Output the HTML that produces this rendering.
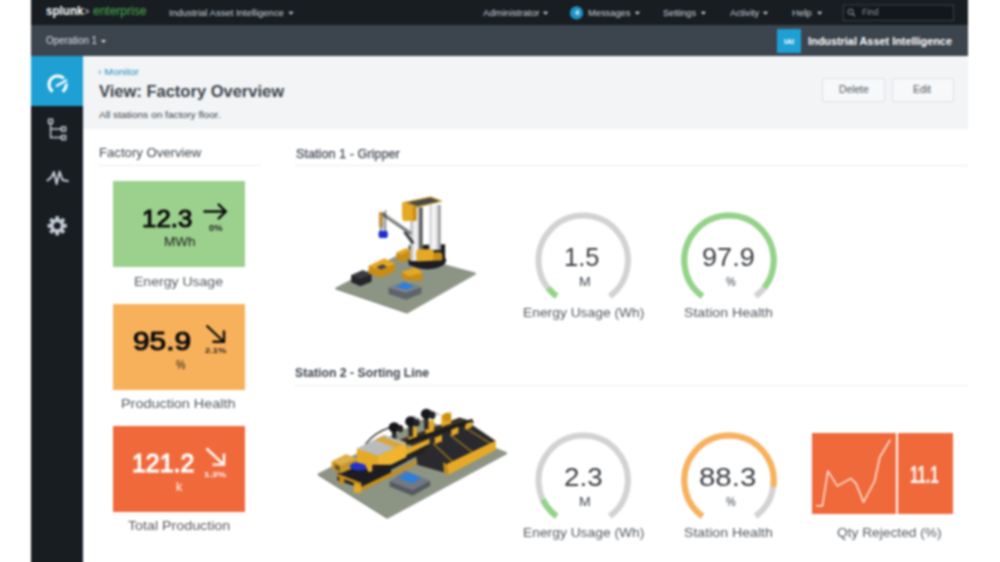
<!DOCTYPE html>
<html lang="en">
<head>
<meta charset="utf-8">
<title>View: Factory Overview | Industrial Asset Intelligence | Splunk</title>
<style>
html,body{margin:0;padding:0;background:#fff;}
body{width:1000px;height:562px;overflow:hidden;position:relative;font-family:"Liberation Sans",Arial,sans-serif;}
.b{position:absolute;}
.t{position:absolute;white-space:pre;line-height:1;transform-origin:0 50%;display:block;}
svg{position:absolute;overflow:visible;}
</style>
</head>
<body>
<div id="app" style="position:absolute;left:0;top:0;width:1000px;height:562px;filter:blur(0.8px)">
<!-- top navigation -->
<nav id="topnav">
<div class="b" style="left:31px;top:-8px;width:937px;height:32.5px;background:#171d21"></div>
<svg width="1000" height="562" viewBox="0 0 1000 562" style="left:0;top:0"><path d="M288.4 11.7h5.2l-2.6 3z" fill="#c9d0d8"/><path d="M543.0 11.7h5.2l-2.6 3z" fill="#c9d0d8"/><path d="M634.8 11.7h5.2l-2.6 3z" fill="#c9d0d8"/><path d="M700.8 11.7h5.2l-2.6 3z" fill="#c9d0d8"/><path d="M762.9 11.7h5.2l-2.6 3z" fill="#c9d0d8"/><path d="M817.1 11.7h5.2l-2.6 3z" fill="#c9d0d8"/><circle cx="576.5" cy="12.9" r="6.6" fill="#1e93c6"/><rect x="843.5" y="5" width="110" height="15.5" fill="#12171b" stroke="#3a424b" stroke-width="1"/><circle cx="850.6" cy="11.8" r="2.6" fill="none" stroke="#9aa3ad" stroke-width="1"/><path d="M852.5 13.8l2.4 2.4" stroke="#9aa3ad" stroke-width="1.1"/></svg>
<span class="t " style="left:46.0px;top:4.3px;font-size:13.5px;font-weight:700;color:#ffffff;transform:scaleX(0.862)">splunk</span>
<span class="t " style="left:84.0px;top:6.0px;font-size:11.5px;font-weight:700;color:#9aa3ad;transform:scaleX(0.789)">&gt;</span>
<span class="t " style="left:92.8px;top:4.3px;font-size:13.5px;font-weight:400;color:#4cab4c;transform:scaleX(0.889)">enterprise</span>
<span class="t " style="left:168.6px;top:8.0px;font-size:9.5px;font-weight:400;color:#c9d0d8;transform:scaleX(0.998)">Industrial Asset Intelligence</span>
<span class="t " style="left:482.6px;top:8.0px;font-size:9.5px;font-weight:400;color:#c9d0d8;transform:scaleX(1.008)">Administrator</span>
<span class="t " style="left:574.5px;top:9.2px;font-size:7.5px;font-weight:700;color:#ffffff;transform:scaleX(0.959)">4</span>
<span class="t " style="left:587.6px;top:8.0px;font-size:9.5px;font-weight:400;color:#c9d0d8;transform:scaleX(0.979)">Messages</span>
<span class="t " style="left:662.6px;top:8.0px;font-size:9.5px;font-weight:400;color:#c9d0d8;transform:scaleX(0.961)">Settings</span>
<span class="t " style="left:729.5px;top:8.0px;font-size:9.5px;font-weight:400;color:#c9d0d8;transform:scaleX(0.967)">Activity</span>
<span class="t " style="left:792.3px;top:8.0px;font-size:9.5px;font-weight:400;color:#c9d0d8;transform:scaleX(1.008)">Help</span>
<span class="t " style="left:862.4px;top:8.2px;font-size:9px;font-weight:400;color:#8b939c;transform:scaleX(0.948)">Find</span>
</nav>
<!-- app bar -->
<div id="appbar">
<div class="b" style="left:31px;top:24.5px;width:937px;height:31.5px;background:#3c444d"></div>
<div class="b" style="left:777px;top:29px;width:24px;height:24px;background:#1ea0d5"></div>
<svg width="1000" height="562" viewBox="0 0 1000 562" style="left:0;top:0"><path d="M100.9 40.0h5.2l-2.6 3z" fill="#d5dbe1"/></svg>
<span class="t " style="left:45.6px;top:36.1px;font-size:10px;font-weight:400;color:#d5dbe1;transform:scaleX(0.976)">Operation 1</span>
<span class="t " style="left:784.0px;top:37.6px;font-size:7px;font-weight:700;color:#ffffff;transform:scaleX(1.117)">IAI</span>
<span class="t " style="left:808.4px;top:35.7px;font-size:11.5px;font-weight:700;color:#ffffff;transform:scaleX(0.945)">Industrial Asset Intelligence</span>
</div>
<!-- sidebar -->
<aside id="sidebar">
<div class="b" style="left:31px;top:56px;width:52px;height:516px;background:#171d21"></div>
<div class="b" style="left:31px;top:56px;width:52px;height:50px;background:#1ea0d5"></div>
<svg width="1000" height="562" viewBox="0 0 1000 562" style="left:0;top:0"><path d="M52.7 91.6A8.6 8.6 0 1 1 62.5 91.6" fill="none" stroke="#fff" stroke-width="3"/><path d="M60.6 83.39999999999999L68.1 79.39999999999999" stroke="#1ea0d5" stroke-width="5.4"/><path d="M56.800000000000004 85.8L66.2 80.39999999999999" stroke="#fff" stroke-width="2.3" stroke-linecap="round"/><g fill="none" stroke="#c3cbd4" stroke-width="1.5"><rect x="48.6" y="119.3" width="4" height="4"/><rect x="61.6" y="127" width="4" height="4"/><rect x="61.6" y="135.6" width="4" height="4"/><path d="M50.6 123.3V137.6H61.6M50.6 129H61.6"/></g><path d="M47.5 180.5L51.5 177L54 172L56.6 184L59.6 171.5L62.5 180L67.8 181" fill="none" stroke="#c3cbd4" stroke-width="2" stroke-linejoin="round" stroke-linecap="round"/><g fill="#c3cbd4"><rect x="55.3" y="216.2" width="3.8" height="5" transform="rotate(0 57.2 225.8)"/><rect x="55.3" y="216.2" width="3.8" height="5" transform="rotate(45 57.2 225.8)"/><rect x="55.3" y="216.2" width="3.8" height="5" transform="rotate(90 57.2 225.8)"/><rect x="55.3" y="216.2" width="3.8" height="5" transform="rotate(135 57.2 225.8)"/><rect x="55.3" y="216.2" width="3.8" height="5" transform="rotate(180 57.2 225.8)"/><rect x="55.3" y="216.2" width="3.8" height="5" transform="rotate(225 57.2 225.8)"/><rect x="55.3" y="216.2" width="3.8" height="5" transform="rotate(270 57.2 225.8)"/><rect x="55.3" y="216.2" width="3.8" height="5" transform="rotate(315 57.2 225.8)"/></g><circle cx="57.2" cy="225.8" r="5.3" fill="none" stroke="#c3cbd4" stroke-width="3.6"/></svg>
</aside>
<!-- page header -->
<header id="pagehead">
<div class="b" style="left:83px;top:56px;width:885px;height:73px;background:#f2f4f5"></div>
<div class="b" style="left:822px;top:78px;width:61px;height:22px;border:1px solid #dde2e8;background:#f7f8fa;border-radius:2px"></div>
<div class="b" style="left:892px;top:78px;width:60px;height:22px;border:1px solid #dde2e8;background:#f7f8fa;border-radius:2px"></div>
<span class="t " style="left:98.3px;top:66.7px;font-size:9.5px;font-weight:400;color:#1e93c6;transform:scaleX(1.086)">‹ Monitor</span>
<span class="t " style="left:98.5px;top:84.3px;font-size:16px;font-weight:700;color:#3c444d;transform:scaleX(1.032)">View: Factory Overview</span>
<span class="t " style="left:98.5px;top:110.0px;font-size:9.5px;font-weight:400;color:#3c444d;transform:scaleX(1.070)">All stations on factory floor.</span>
<span class="t " style="left:838.7px;top:84.8px;font-size:10px;font-weight:400;color:#53595f;transform:scaleX(1.027)">Delete</span>
<span class="t " style="left:913.4px;top:84.8px;font-size:10px;font-weight:400;color:#53595f;transform:scaleX(1.044)">Edit</span>
</header>
<main id="main">
<section id="overview">
<div class="b" style="left:98px;top:165px;width:163px;height:1px;background:#e9ecee"></div>
<div class="b" style="left:113px;top:181px;width:132px;height:86px;background:#9bd18d"></div>
<div class="b" style="left:113px;top:303.5px;width:132px;height:86px;background:#f8b15b"></div>
<div class="b" style="left:113px;top:425.5px;width:132px;height:86px;background:#f0693b"></div>
<svg width="1000" height="562" viewBox="0 0 1000 562" style="left:0;top:0"><path d="M203.5 211.5H225.5M218 203.8l7.8 7.7l-7.8 7.7" fill="none" stroke="#0b0b0b" stroke-width="2.4"/><path d="M206.5 325.5L223.5 341.5M212.5 341.8H224V330.5" fill="none" stroke="#0b0b0b" stroke-width="2.4"/><path d="M206.5 448.5L223.5 464.3M212.5 464.6H224V453.5" fill="none" stroke="#fff" stroke-width="2.4"/></svg>
<span class="t " style="left:98.7px;top:147.4px;font-size:12.5px;font-weight:400;color:#3c444d;transform:scaleX(1.052)">Factory Overview</span>
<span class="t " style="left:142.3px;top:206.5px;font-size:24.5px;font-weight:400;color:#0b0b0b;transform:scaleX(1.055);-webkit-text-stroke:1.1px #0b0b0b">12.3</span>
<span class="t " style="left:164.2px;top:235.9px;font-size:12.5px;font-weight:400;color:#1a1a1a;transform:scaleX(1.083)">MWh</span>
<span class="t " style="left:209.0px;top:224.3px;font-size:8.5px;font-weight:700;color:#1a1a1a;transform:scaleX(1.098)">0%</span>
<span class="t " style="left:134.0px;top:274.9px;font-size:13.5px;font-weight:400;color:#53595f;transform:scaleX(1.040)">Energy Usage</span>
<span class="t " style="left:132.8px;top:327.6px;font-size:26px;font-weight:400;color:#0b0b0b;transform:scaleX(1.146);-webkit-text-stroke:1.1px #0b0b0b">95.9</span>
<span class="t " style="left:175.9px;top:358.9px;font-size:12.5px;font-weight:400;color:#1a1a1a;transform:scaleX(0.845)">%</span>
<span class="t " style="left:205.0px;top:347.1px;font-size:8px;font-weight:700;color:#1a1a1a;transform:scaleX(1.174)">2.1%</span>
<span class="t " style="left:121.1px;top:396.9px;font-size:13.5px;font-weight:400;color:#53595f;transform:scaleX(1.067)">Production Health</span>
<span class="t " style="left:132.3px;top:450.3px;font-size:26px;font-weight:400;color:#ffffff;transform:scaleX(0.957);-webkit-text-stroke:1.1px #ffffff">121.2</span>
<span class="t " style="left:175.9px;top:481.3px;font-size:12.5px;font-weight:400;color:#ffffff;transform:scaleX(0.992)">k</span>
<span class="t " style="left:204.0px;top:470.8px;font-size:8px;font-weight:700;color:#ffffff;transform:scaleX(1.207)">1.3%</span>
<span class="t " style="left:127.8px;top:519.4px;font-size:13.5px;font-weight:400;color:#53595f;transform:scaleX(1.055)">Total Production</span>
</section>
<section id="station1">
<div class="b" style="left:295px;top:165px;width:673px;height:1px;background:#e9ecee"></div>
<svg width="1000" height="562" viewBox="0 0 1000 562" style="left:0;top:0"><defs><filter id="soft" x="-5%" y="-5%" width="110%" height="110%"><feGaussianBlur stdDeviation="3.2"/></filter></defs><path d="M556.61 296.23A44.7 44.7 0 1 1 609.79 296.23" fill="none" stroke="#d2d2d2" stroke-width="6.0"/><path d="M556.61 296.23A44.7 44.7 0 1 1 609.79 296.23" fill="none" stroke="#93d388" stroke-width="6.0" stroke-dasharray="11.6 233.9"/><path d="M702.41 296.23A44.7 44.7 0 1 1 755.59 296.23" fill="none" stroke="#d2d2d2" stroke-width="6.0"/><path d="M702.41 296.23A44.7 44.7 0 1 1 755.59 296.23" fill="none" stroke="#93d388" stroke-width="6.0" stroke-dasharray="210.9 233.9"/><g transform="translate(320 180) scale(0.24922)" filter="url(#soft)"><polygon points="62,432 330,292 625,372 350,530" fill="#8c9484" /><polygon points="62,432 350,530 350,536 62,438" fill="#6d7467" /><polygon points="350,530 625,372 625,378 350,536" fill="#7b8274" /><polygon points="125,382 172,362 207,378 207,408 162,426 125,410" fill="#26282b" /><polygon points="125,382 172,362 207,378 162,396" fill="#3a3d40" /><polygon points="195,345 258,315 302,335 302,368 242,392 195,375" fill="#c78d18" /><polygon points="195,345 258,315 302,335 242,362" fill="#e6a925" /><polygon points="225,350 250,338 270,348 245,360" fill="#444" /><polygon points="328,368 385,352 412,372 408,405 352,402 330,392" fill="#c78d18" /><polygon points="328,368 385,352 412,372 356,386" fill="#e6a925" /><polygon points="275,432 335,408 407,430 407,455 345,480 275,457" fill="#5f646b" /><polygon points="275,432 335,408 407,430 345,452" fill="#7d838b" /><polygon points="303,428 338,412 380,424 345,440" fill="#2a7fe0" /><ellipse cx="430" cy="322" rx="76" ry="36" fill="#1e1f21"/><polygon points="356,262 502,258 502,322 356,330" fill="#1e1f21" /><polygon points="306,292 345,274 363,282 363,318 325,330 306,318" fill="#c78d18" /><polygon points="306,292 345,274 363,282 325,300" fill="#e6a925" /><rect x="362" y="110" width="50" height="215" fill="#c4c5c7"/><rect x="374" y="110" width="18" height="215" fill="#f0f0f0"/><rect x="398" y="110" width="14" height="215" fill="#5e6062"/><rect x="438" y="100" width="46" height="180" fill="#d9dadc"/><rect x="450" y="100" width="14" height="180" fill="#f6f6f6"/><rect x="474" y="100" width="10" height="180" fill="#9a9c9e"/><rect x="386" y="278" width="72" height="52" rx="16" fill="#e6a925"/><rect x="455" y="290" width="36" height="40" rx="14" fill="#c78d18"/><polygon points="356,328 502,322 502,336 430,358 356,342" fill="#1e1f21" /><polygon points="329,90 445,66 493,85 387,111" fill="#c78d18" /><polygon points="352,89 443,71 480,85 390,104" fill="#47484a" /><polygon points="329,90 387,111 387,163 335,166 329,150" fill="#e6a925" /><polygon points="372,106 387,111 387,163 372,164" fill="#c78d18" /><path d="M339 207L374 254" stroke="#3a3a3a" stroke-width="12"/><path d="M254 138L360 212" stroke="#77797b" stroke-width="14" stroke-linecap="round"/><path d="M258 133L362 205" stroke="#c9cacb" stroke-width="5"/><path d="M243 132V206M263 122V206M253 128V200" stroke="#2a2a2a" stroke-width="3.5"/><rect x="236" y="128" width="14" height="60" fill="#c78d18" opacity="0.8"/><rect x="235" y="204" width="37" height="29" rx="8" fill="#1c2fd6"/></g></svg>
<span class="t " style="left:295.6px;top:147.5px;font-size:12.5px;font-weight:400;color:#3c444d;transform:scaleX(1.016);-webkit-text-stroke:0.25px #3c444d">Station 1 - Gripper</span>
<span class="t " style="left:564.4px;top:245.2px;font-size:25.5px;font-weight:400;color:#3a3e43;transform:scaleX(0.999)">1.5</span>
<span class="t " style="left:578.6px;top:276.1px;font-size:12.5px;font-weight:400;color:#3c444d;transform:scaleX(1.123)">M</span>
<span class="t " style="left:522.5px;top:306.4px;font-size:13.5px;font-weight:400;color:#53595f;transform:scaleX(1.024)">Energy Usage (Wh)</span>
<span class="t " style="left:702.2px;top:245.2px;font-size:25.5px;font-weight:400;color:#3a3e43;transform:scaleX(1.064)">97.9</span>
<span class="t " style="left:725.8px;top:276.1px;font-size:12.5px;font-weight:400;color:#3c444d;transform:scaleX(0.872)">%</span>
<span class="t " style="left:683.7px;top:306.4px;font-size:13.5px;font-weight:400;color:#53595f;transform:scaleX(1.048)">Station Health</span>
</section>
<section id="station2">
<div class="b" style="left:295px;top:385px;width:673px;height:1px;background:#e9ecee"></div>
<div class="b" style="left:812.4px;top:433px;width:140.7px;height:81px;background:#f0693b"></div>
<div class="b" style="left:895.6px;top:433px;width:2px;height:81px;background:#fff"></div>
<svg width="1000" height="562" viewBox="0 0 1000 562" style="left:0;top:0"><path d="M556.61 516.23A44.7 44.7 0 1 1 609.79 516.23" fill="none" stroke="#d2d2d2" stroke-width="6.0"/><path d="M556.61 516.23A44.7 44.7 0 1 1 609.79 516.23" fill="none" stroke="#93d388" stroke-width="6.0" stroke-dasharray="21.9 233.9"/><path d="M702.41 516.23A44.7 44.7 0 1 1 755.59 516.23" fill="none" stroke="#d2d2d2" stroke-width="6.0"/><path d="M702.41 516.23A44.7 44.7 0 1 1 755.59 516.23" fill="none" stroke="#f8b15b" stroke-width="6.0" stroke-dasharray="188.1 233.9"/><polyline points="816.2,505.9 822.4,505.9 827.9,471 837.3,486 851,478.5 856,483.5 863.5,502.2 874.7,481 879.7,457.3 890.1,439.9" fill="none" stroke="#fff" stroke-width="1.3" stroke-linejoin="round"/><g transform="translate(300 390) scale(0.24915)" filter="url(#soft)"><polygon points="72,335 498,116 830,250 350,510" fill="#8c9484" /><polygon points="72,335 350,510 350,517 72,342" fill="#6d7467" /><polygon points="350,510 830,250 830,257 350,517" fill="#7b8274" /><polygon points="400,200 640,110 700,128 470,235" fill="#3a3326" /><polygon points="435,157 470,145 470,192 435,205" fill="#e6a925" /><polygon points="504,128 538,116 538,168 504,182" fill="#e6a925" /><polygon points="567,100 607,88 607,134 567,148" fill="#e6a925" /><circle cx="590" cy="108" r="17" fill="#c98f17"/><rect x="369" y="150" width="18" height="62" fill="#2a2a2a"/><ellipse cx="378" cy="150" rx="22" ry="21" fill="#18191a"/><ellipse cx="402" cy="155" rx="13" ry="15" fill="#232425"/><rect x="435" y="126" width="18" height="62" fill="#2a2a2a"/><ellipse cx="444" cy="126" rx="22" ry="21" fill="#18191a"/><ellipse cx="468" cy="131" rx="13" ry="15" fill="#232425"/><rect x="498" y="96" width="18" height="62" fill="#2a2a2a"/><ellipse cx="507" cy="96" rx="22" ry="21" fill="#18191a"/><ellipse cx="531" cy="101" rx="13" ry="15" fill="#232425"/><path d="M262 218Q300 170 362 150" fill="none" stroke="#1c1c1c" stroke-width="5"/><path d="M520 80L560 100M455 105L500 128" fill="none" stroke="#555" stroke-width="3"/><polygon points="464,250 498,205 665,122 786,205 600,335 575,330 470,300" fill="#2a2c2e" /><path d="M535 215L612 288" stroke="#866722" stroke-width="7"/><path d="M602 180L690 248" stroke="#866722" stroke-width="7"/><path d="M660 150L765 215" stroke="#866722" stroke-width="7"/><path d="M424 212L694 124" stroke="#1b1c1d" stroke-width="18"/><polygon points="541,192 570,180 570,206 541,218" fill="#e6a925" /><polygon points="607,160 636,148 636,174 607,186" fill="#e6a925" /><polygon points="664,136 690,126 690,150 664,160" fill="#e6a925" /><polygon points="588,298 786,203 786,240 596,340" fill="#e6a925" /><polygon points="575,290 588,298 596,340 578,332" fill="#c78d18" /><polygon points="425,236 520,196 520,216 425,262" fill="#e6a925" /><polygon points="425,262 520,216 500,250 425,288" fill="#222" /><polygon points="228,235 338,180 427,212 312,265" fill="#b9bcbb" /><polygon points="300,200 330,186 420,222 392,236" fill="#d8a73a" /><polygon points="228,235 312,265 312,326 228,294" fill="#e6a925" /><polygon points="312,265 427,212 427,270 312,326" fill="#f0b42e" /><polygon points="150,335 240,300 365,300 365,335 240,392 150,362" fill="#1d1e20" /><polygon points="312,326 427,270 427,288 312,348" fill="#1d1e20" /><polygon points="240,392 470,280 470,296 240,408" fill="#c78d18" /><polygon points="127,287 185,258 226,276 226,308 165,334 127,316" fill="#c9952a" /><polygon points="127,287 185,258 226,276 165,302" fill="#ddb04a" /><polygon points="140,297 160,307 160,327 140,317" fill="#6b5320" /><ellipse cx="238" cy="306" rx="38" ry="17" fill="#2230c8"/><polygon points="228,270 290,292 290,326 275,330 262,300 228,290" fill="#e6a925" /><rect x="216" y="372" width="30" height="40" fill="#e6a925"/><rect x="158" y="345" width="20" height="32" fill="#c78d18"/><polygon points="150,335 240,370 240,382 150,347" fill="#c78d18" /><polygon points="360,367 422,325 522,365 522,385 452,424 360,387" fill="#555a61" /><polygon points="360,367 422,325 522,365 452,402" fill="#737981" /><polygon points="395,352 430,331 487,352 450,374" fill="#2a7fe0" /></g></svg>
<span class="t " style="left:295.0px;top:366.5px;font-size:12.5px;font-weight:700;color:#3c444d;transform:scaleX(0.979)">Station 2 - Sorting Line</span>
<span class="t " style="left:564.4px;top:465.2px;font-size:25.5px;font-weight:400;color:#3a3e43;transform:scaleX(1.089)">2.3</span>
<span class="t " style="left:578.6px;top:496.1px;font-size:12.5px;font-weight:400;color:#3c444d;transform:scaleX(1.123)">M</span>
<span class="t " style="left:522.5px;top:526.4px;font-size:13.5px;font-weight:400;color:#53595f;transform:scaleX(1.024)">Energy Usage (Wh)</span>
<span class="t " style="left:698.5px;top:465.2px;font-size:25.5px;font-weight:400;color:#3a3e43;transform:scaleX(1.154)">88.3</span>
<span class="t " style="left:725.8px;top:496.1px;font-size:12.5px;font-weight:400;color:#3c444d;transform:scaleX(0.872)">%</span>
<span class="t " style="left:683.7px;top:526.4px;font-size:13.5px;font-weight:400;color:#53595f;transform:scaleX(1.048)">Station Health</span>
<span class="t " style="left:909.5px;top:462.7px;font-size:24.5px;font-weight:700;color:#ffffff;transform:scaleX(0.619)">11.1</span>
<span class="t " style="left:836.8px;top:526.4px;font-size:13.5px;font-weight:400;color:#53595f;transform:scaleX(1.018)">Qty Rejected (%)</span>
</section>
</main>
</div>
</body>
</html>
